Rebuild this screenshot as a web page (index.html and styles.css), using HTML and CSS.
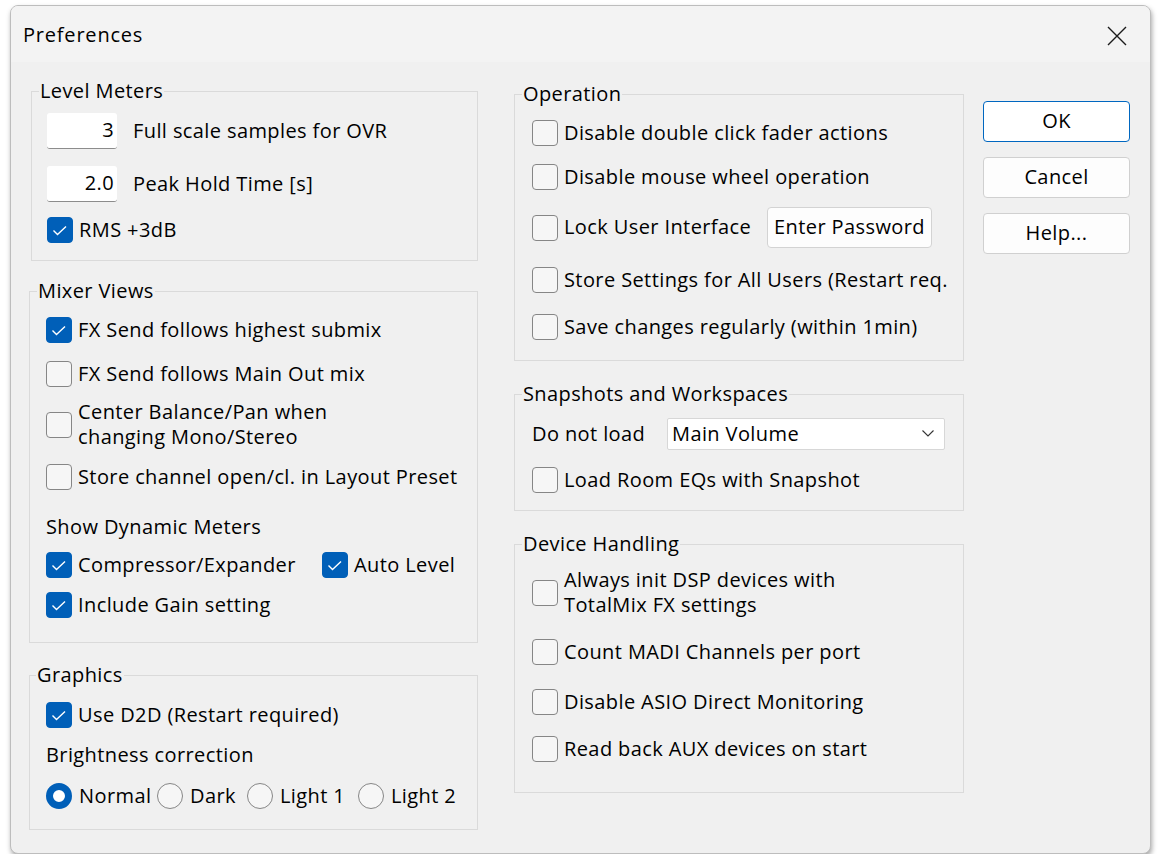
FILE: index.html
```html
<!DOCTYPE html>
<html lang="en">
<head>
    <meta charset="UTF-8">
    <title>Preferences</title>
    <link rel="stylesheet" href="styles.css">
</head>
<body>
    <div class="dialog">
        <div class="titlebar">
            <span class="title">Preferences</span>
            <span class="close">
                <svg width="20" height="20" viewBox="0 0 20 20"><path d="M1 1 L19 19 M19 1 L1 19" stroke="#1b1b1b" stroke-width="1.4" fill="none"/></svg>
            </span>
        </div>

        <div class="content">
            <!-- columna izquierda -->
            <div class="col col-left">
                <fieldset class="group group-level">
                    <legend>Level Meters</legend>
                    <div class="field s10">
                        <span class="edit">3</span>
                        <span class="field-label">Full scale samples for OVR</span>
                    </div>
                    <div class="field s17">
                        <span class="edit">2.0</span>
                        <span class="field-label">Peak Hold Time [s]</span>
                    </div>
                    <label class="opt s15"><span class="box on"><svg viewBox="0 0 26 26"><path d="M6.5 13.5 L10.5 17.5 L19 9.5"/></svg></span><span>RMS +3dB</span></label>
                </fieldset>

                <fieldset class="group group-mixer">
                    <legend>Mixer Views</legend>
                    <label class="opt s14"><span class="box on"><svg viewBox="0 0 26 26"><path d="M6.5 13.5 L10.5 17.5 L19 9.5"/></svg></span><span>FX Send follows highest submix</span></label>
                    <label class="opt s18"><span class="box"></span><span>FX Send follows Main Out mix</span></label>
                    <label class="opt two s13"><span class="box"></span><span>Center Balance/Pan when<br>changing Mono/Stereo</span></label>
                    <label class="opt s14"><span class="box"></span><span>Store channel open/cl. in Layout Preset</span></label>
                    <div class="caption s25">Show Dynamic Meters</div>
                    <div class="pair s11">
                        <label class="opt comp"><span class="box on"><svg viewBox="0 0 26 26"><path d="M6.5 13.5 L10.5 17.5 L19 9.5"/></svg></span><span>Compressor/Expander</span></label>
                        <label class="opt"><span class="box on"><svg viewBox="0 0 26 26"><path d="M6.5 13.5 L10.5 17.5 L19 9.5"/></svg></span><span>Auto Level</span></label>
                    </div>
                    <label class="opt s14"><span class="box on"><svg viewBox="0 0 26 26"><path d="M6.5 13.5 L10.5 17.5 L19 9.5"/></svg></span><span>Include Gain setting</span></label>
                </fieldset>

                <fieldset class="group group-graphics">
                    <legend>Graphics</legend>
                    <label class="opt s15"><span class="box on"><svg viewBox="0 0 26 26"><path d="M6.5 13.5 L10.5 17.5 L19 9.5"/></svg></span><span>Use D2D (Restart required)</span></label>
                    <div class="caption s15">Brightness correction</div>
                    <div class="radios s14">
                        <label class="radio r-normal"><span class="dot on"></span><span>Normal</span></label>
                        <label class="radio r-dark"><span class="dot"></span><span>Dark</span></label>
                        <label class="radio r-light"><span class="dot"></span><span>Light 1</span></label>
                        <label class="radio"><span class="dot"></span><span>Light 2</span></label>
                    </div>
                </fieldset>
            </div>

            <!-- columna derecha -->
            <div class="col col-right">
                <fieldset class="group group-operation">
                    <legend>Operation</legend>
                    <label class="opt s14"><span class="box"></span><span>Disable double click fader actions</span></label>
                    <label class="opt s18"><span class="box"></span><span>Disable mouse wheel operation</span></label>
                    <div class="lock-row s17">
                        <label class="opt lock"><span class="box"></span><span>Lock User Interface</span></label>
                        <span class="btn-small">Enter Password</span>
                    </div>
                    <label class="opt s19"><span class="box"></span><span>Store Settings for All Users (Restart req.</span></label>
                    <label class="opt s21"><span class="box"></span><span>Save changes regularly (within 1min)</span></label>
                </fieldset>

                <fieldset class="group group-snap">
                    <legend>Snapshots and Workspaces</legend>
                    <div class="combo-row s12">
                        <span class="combo-label">Do not load</span>
                        <span class="combo">
                            <span>Main Volume</span>
                            <svg width="12" height="7" viewBox="0 0 12 7"><path d="M0.5 0.5 L6 6 L11.5 0.5" stroke="#333" stroke-width="1.1" fill="none"/></svg>
                        </span>
                    </div>
                    <label class="opt s17"><span class="box"></span><span>Load Room EQs with Snapshot</span></label>
                </fieldset>

                <fieldset class="group group-device">
                    <legend>Device Handling</legend>
                    <label class="opt two s12"><span class="box"></span><span>Always init DSP devices with<br>TotalMix FX settings</span></label>
                    <label class="opt s21"><span class="box"></span><span>Count MADI Channels per port</span></label>
                    <label class="opt s24"><span class="box"></span><span>Disable ASIO Direct Monitoring</span></label>
                    <label class="opt s21"><span class="box"></span><span>Read back AUX devices on start</span></label>
                </fieldset>
            </div>

            <div class="actions">
                <button class="btn default">OK</button>
                <button class="btn">Cancel</button>
                <button class="btn">Help...</button>
            </div>
        </div>
    </div>
</body>
</html>
```

FILE: styles.css
```css
* {
    box-sizing: border-box;
}
body {
    margin: 0;
    background: #fff;
    font-family: "Open Sans", "Noto Sans", sans-serif;
    font-size: 20px;
    letter-spacing: 0.4px;
    color: #000;
}
.dialog {
    margin: 5px 0 0 10px;
    width: 1141px;
    height: 849px;
    background: #f0f0f0;
    border: 1px solid #bdbdbd;
    border-radius: 8px;
    box-shadow: 1px 3px 5px rgba(0, 0, 0, 0.35);
    overflow: hidden;
}
.titlebar {
    height: 56px;
    background: #f3f3f3;
    display: flex;
    align-items: center;
    justify-content: space-between;
    padding: 1px 23px 0 12px;
}
.title {
    letter-spacing: 0.8px;
}
.close {
    display: flex;
    margin-top: 2px;
}
.content {
    display: flex;
    align-items: flex-start;
    padding-left: 18px;
}
.col-left {
    width: 449px;
    margin-top: 17px;
}
.col-right {
    width: 450px;
    margin-left: 36px;
    margin-top: 20px;
}
.actions {
    width: 147px;
    margin-left: 19px;
    margin-top: 39px;
    display: flex;
    flex-direction: column;
    gap: 15px;
}

/* group boxes */
.group {
    margin: 0;
    border: 1px solid #dadada;
    padding: 0 10px 0 16px;
}
.group legend {
    padding: 0 1px;
    line-height: 24px;
    margin-left: -9px;
}
.group-level {
    margin-left: 2px;
    padding-left: 15px;
    padding-bottom: 17px;
}
.group-level legend { margin-left: -8px; }
.group-mixer {
    margin-top: 18px;
    padding-bottom: 24px;
}
.group-graphics {
    margin-top: 20px;
    padding-bottom: 20px;
}
.group-graphics legend { margin-left: -10px; }
.col-right .group {
    padding-left: 17px;
}
.col-right .group legend { margin-left: -10px; }
.group-operation { padding-bottom: 20px; }
.group-snap {
    margin-top: 21px;
    padding-bottom: 17px;
}
.group-device {
    margin-top: 21px;
    padding-bottom: 30px;
}

/* espacios entre filas */
.s10 { margin-top: 10px; }
.s11 { margin-top: 11px; }
.s12 { margin-top: 12px; }
.s13 { margin-top: 13px; }
.s14 { margin-top: 14px; }
.s15 { margin-top: 15px; }
.s17 { margin-top: 17px; }
.s18 { margin-top: 18px; }
.s19 { margin-top: 19px; }
.s21 { margin-top: 21px; }
.s24 { margin-top: 24px; }
.s25 { margin-top: 25px; }

/* edit fields */
.field {
    display: flex;
    align-items: center;
    height: 36px;
}
.edit {
    width: 70px;
    height: 36px;
    background: #fff;
    border-bottom: 1px solid #8c8c8c;
    border-radius: 3px;
    text-align: right;
    padding-right: 3px;
    line-height: 33px;
}
.field-label {
    margin-left: 16px;
    padding-bottom: 2px;
}

/* checkboxes */
.opt {
    display: flex;
    align-items: center;
    height: 26px;
    line-height: 25px;
}
.opt span:last-child {
    padding-bottom: 2px;
}
.opt.two {
    height: 50px;
}
.box {
    flex: none;
    width: 26px;
    height: 26px;
    margin-right: 6px;
    border: 1px solid #868686;
    border-radius: 4px;
    background: #f6f6f6;
}
.box.on {
    background: #005fb8;
    border-color: #005fb8;
}
.box svg {
    display: block;
    margin: -1px;
    width: 26px;
    height: 26px;
}
.box svg path {
    fill: none;
    stroke: #fff;
    stroke-width: 1.4;
}
.caption {
    height: 26px;
    line-height: 24px;
}
.pair {
    display: flex;
}
.comp {
    width: 276px;
}

/* radios */
.radios {
    display: flex;
}
.radio {
    display: flex;
    align-items: center;
    height: 26px;
}
.radio span:last-child {
    padding-bottom: 2px;
}
.r-normal { width: 111px; }
.r-dark { width: 90px; }
.r-light { width: 111px; }
.dot {
    flex: none;
    width: 26px;
    height: 26px;
    margin-right: 7px;
    border: 1px solid #868686;
    border-radius: 50%;
    background: #f6f6f6;
}
.dot.on {
    border: 7.5px solid #005fb8;
    background: #fff;
}

/* operation */
.lock-row {
    display: flex;
    align-items: center;
    height: 41px;
}
.lock {
    width: 235px;
}
.btn-small {
    width: 165px;
    height: 41px;
    line-height: 37px;
    text-align: center;
    background: #fdfdfd;
    border: 1px solid #d3d3d3;
    border-radius: 4px;
}

/* combo */
.combo-row {
    display: flex;
    align-items: center;
    height: 32px;
}
.combo-label {
    width: 135px;
    padding-bottom: 2px;
}
.combo {
    width: 278px;
    height: 32px;
    display: flex;
    align-items: center;
    justify-content: space-between;
    padding: 0 10px 2px 4px;
    background: #fff;
    border: 1px solid #d7d7d7;
    border-radius: 2px;
}

/* botones */
.btn {
    height: 41px;
    font: inherit;
    letter-spacing: inherit;
    color: #000;
    background: #fdfdfd;
    border: 1px solid #d0d0d0;
    border-radius: 4px;
    padding: 0 0 2px;
}
.btn.default {
    border-color: #0067c0;
    background: #fff;
}
```
